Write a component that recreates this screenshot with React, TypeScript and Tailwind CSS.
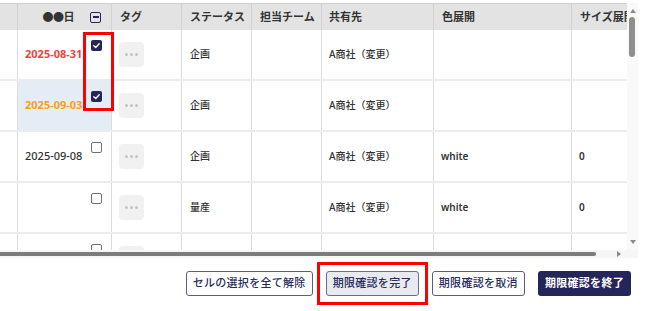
import React from 'react';

type Row = {
  date?: string;
  dateTone?: 'red' | 'orange' | 'normal';
  checked: boolean;
  highlight?: boolean;
  status?: string;
  share?: string;
  color?: string;
  size?: string;
};

const rows: Row[] = [
  { date: '2025-08-31', dateTone: 'red', checked: true, status: '企画', share: 'A商社（変更）' },
  { date: '2025-09-03', dateTone: 'orange', checked: true, highlight: true, status: '企画', share: 'A商社（変更）' },
  { date: '2025-09-08', dateTone: 'normal', checked: false, status: '企画', share: 'A商社（変更）', color: 'white', size: '0' },
  { checked: false, status: '量産', share: 'A商社（変更）', color: 'white', size: '0' },
  { checked: false },
];

const cols = 'grid grid-cols-[18px_94px_70px_70px_70px_112px_138px_55px]';

function Checkbox({ checked }: { checked: boolean }) {
  if (checked) {
    return (
      <span className="flex h-[11px] w-[11px] items-center justify-center rounded-[2px] bg-[#23265a]">
        <svg width="9" height="9" viewBox="0 0 10 10">
          <path d="M2 5.2 L4.2 7.2 L8 3" fill="none" stroke="#fff" strokeWidth="1.5" strokeLinecap="round" strokeLinejoin="round" />
        </svg>
      </span>
    );
  }
  return <span className="block h-[11px] w-[11px] rounded-[2px] border-[1.5px] border-[#707070] bg-white" />;
}

function Dots() {
  return (
    <span className="flex h-[25px] w-[25px] items-center justify-center gap-[2px] rounded-[4px] bg-[#f1f1f1]">
      <span className="h-[3px] w-[3px] rounded-full bg-[#c4c4c4]" />
      <span className="h-[3px] w-[3px] rounded-full bg-[#c4c4c4]" />
      <span className="h-[3px] w-[3px] rounded-full bg-[#c4c4c4]" />
    </span>
  );
}

const toneClass = {
  red: 'font-bold text-[#f0433a]',
  orange: 'font-bold text-[#f5a01a]',
  normal: 'text-[#333]',
};

export default function App() {
  return (
    <div
      className="relative h-[311px] w-[647px] overflow-hidden bg-white text-[#333]"
      style={{ fontFamily: '"Noto Sans", "Noto Sans CJK JP", sans-serif' }}
    >
      <div className="h-[3px]" />
      <div className="flex">
        <div className="relative h-[247px] w-[627px] overflow-hidden">
          {/* header */}
          <div className={`${cols} h-[27px] border-t border-[#cfcfcf] bg-[#e3e3e3] text-[11px] font-bold`}>
            <div className="border-r border-[#d2d2d2]" />
            <div className="flex items-center justify-end border-r border-[#d2d2d2] pr-[10px]">
              <span className="mr-[16px] tracking-[-0.5px]">●●日</span>
              <span className="flex h-[11px] w-[11px] items-center justify-center rounded-[2px] border-[1.5px] border-[#23265a]">
                <span className="h-[1.5px] w-[6px] bg-[#23265a]" />
              </span>
            </div>
            <div className="flex items-center border-r border-[#d2d2d2] pl-[8px]">タグ</div>
            <div className="flex items-center border-r border-[#d2d2d2] pl-[8px]">ステータス</div>
            <div className="flex items-center border-r border-[#d2d2d2] pl-[8px]">担当チーム</div>
            <div className="flex items-center border-r border-[#d2d2d2] pl-[7px]">共有先</div>
            <div className="flex items-center border-r border-[#d2d2d2] pl-[8px]">色展開</div>
            <div className="flex items-center overflow-hidden whitespace-nowrap pl-[8px]">サイズ展開</div>
          </div>
          {/* body */}
          {rows.map((r, i) => (
            <div key={i} className={`${cols} h-[51px] border-b-2 border-[#ececec] text-[10px] font-medium`}>
              <div className="border-r border-[#dcdcdc]" />
              <div
                className={`relative flex items-center border-r border-[#dcdcdc] pl-[7px] ${
                  r.highlight ? 'bg-[#e4edf6]' : ''
                }`}
              >
                {r.date && (
                  <span className={`text-[11px] ${toneClass[r.dateTone ?? 'normal']}`}>{r.date}</span>
                )}
                <span className="absolute right-[9px] top-[10px]">
                  <Checkbox checked={r.checked} />
                </span>
              </div>
              <div className="flex items-center border-r border-[#dcdcdc] pl-[7px]">
                <Dots />
              </div>
              <div className="flex items-center border-r border-[#dcdcdc] pl-[8px]">{r.status}</div>
              <div className="border-r border-[#dcdcdc]" />
              <div className="flex items-center border-r border-[#dcdcdc] pl-[7px]">{r.share}</div>
              <div className="flex items-center border-r border-[#dcdcdc] pl-[7px] font-semibold">{r.color}</div>
              <div className="flex items-center pl-[7px] font-semibold">{r.size}</div>
            </div>
          ))}
          {/* red highlight around checkboxes */}
          <div className="absolute left-[83px] top-[29px] h-[79px] w-[31px] border-[3px] border-[#ff0000]" />
        </div>
        {/* vertical scrollbar */}
        <div className="relative h-[247px] w-[11px] bg-[#f9f9f9]">
          <svg className="absolute left-[3px] top-[6px]" width="6" height="4" viewBox="0 0 6 4">
            <path d="M0 4 L3 0 L6 4 Z" fill="#8a8a8a" />
          </svg>
          <div className="absolute left-[2px] top-[14px] h-[40px] w-[6px] rounded-full bg-[#8e8e8e]" />
          <svg className="absolute left-[3px] top-[237px]" width="6" height="4" viewBox="0 0 6 4">
            <path d="M0 0 L3 4 L6 0 Z" fill="#8a8a8a" />
          </svg>
        </div>
      </div>
      {/* horizontal scrollbar */}
      <div className="relative h-[8px] w-[638px] bg-[#f6f6f6]">
        <div className="absolute left-0 top-[2px] h-[4px] w-[596px] rounded-r-[2px] bg-[#7c7c7c]" />
        <svg className="absolute left-[617px] top-[1px]" width="4" height="6" viewBox="0 0 4 6">
          <path d="M0 0 L4 3 L0 6 Z" fill="#8a8a8a" />
        </svg>
      </div>
      {/* footer buttons */}
      <div className="mt-[13px] flex justify-end gap-[13px] pr-[16px] text-[11px] tracking-[0.3px]">
        <button className="h-[25px] rounded-[3px] border border-[#5a5d80] bg-white px-[6px] font-medium text-[#2a2d5c]">
          セルの選択を全て解除
        </button>
        <span className="relative">
          <button className="h-[25px] rounded-[3px] border border-[#6a6d88] bg-[#e8eaf0] px-[6px] font-medium text-[#2a2d5c]">
            期限確認を完了
          </button>
          <span className="absolute -inset-[9px] border-[3px] border-[#ff0000]" />
        </span>
        <button className="h-[25px] rounded-[3px] border border-[#5a5d80] bg-white px-[6px] font-medium text-[#2a2d5c]">
          期限確認を取消
        </button>
        <button className="h-[25px] rounded-[3px] bg-[#24255a] px-[7px] font-bold text-white">
          期限確認を終了
        </button>
      </div>
    </div>
  );
}
